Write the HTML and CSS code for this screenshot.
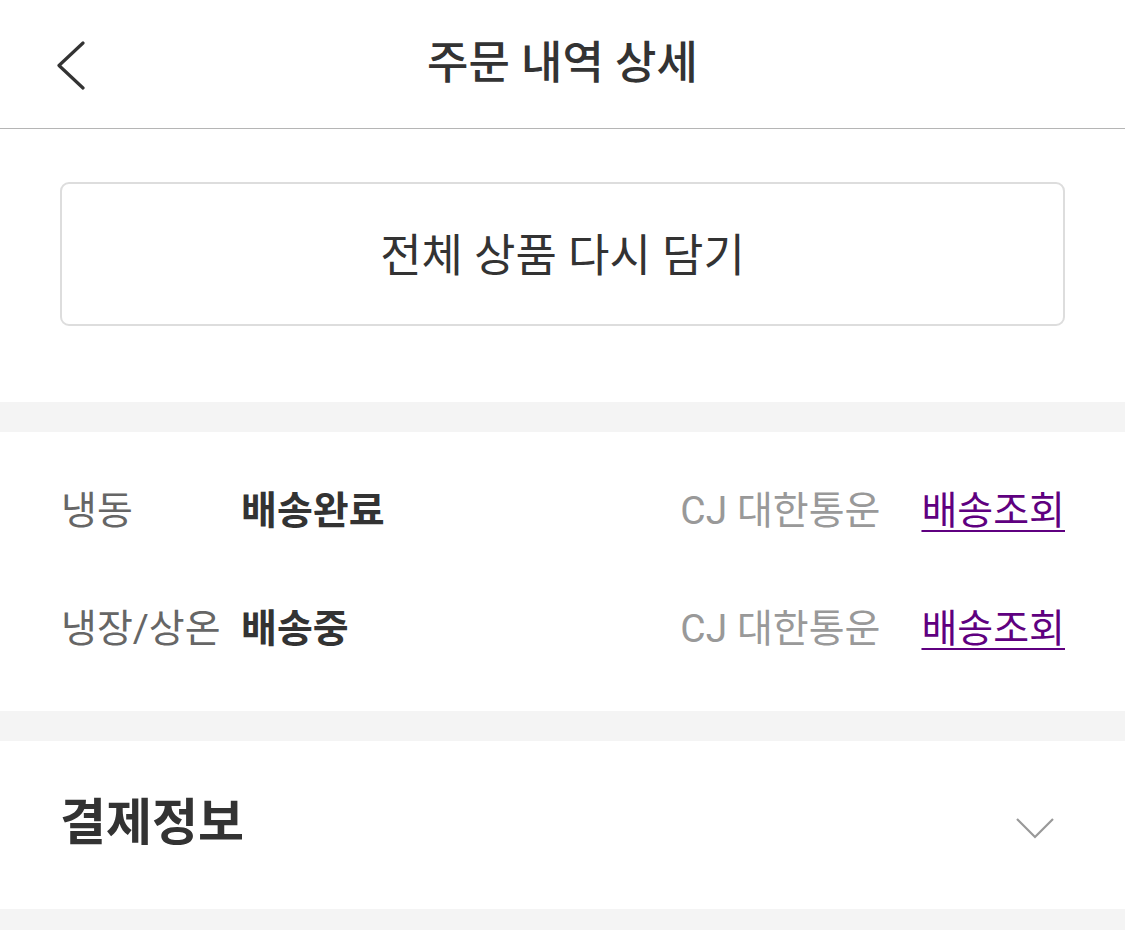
FILE: index.html
```html
<!DOCTYPE html>
<html lang="ko">
<head>
<meta charset="utf-8">
<title>주문 내역 상세</title>
<link rel="stylesheet" href="styles.css">
</head>
<body>
<div class="page">
  <header class="header">
    <button class="back" aria-label="뒤로">
      <svg width="32" height="50" viewBox="0 0 32 50"><path d="M28 3 L4 25.5 L28 48" fill="none" stroke="#333" stroke-width="3.2" stroke-linecap="round" stroke-linejoin="round"/></svg>
    </button>
    <h1 class="title">주문 내역 상세</h1>
  </header>

  <section class="cart-area">
    <button class="reorder">전체 상품 다시 담기</button>
  </section>

  <div class="divider"></div>

  <section class="delivery">
    <div class="row">
      <span class="label">냉동</span>
      <span class="status">배송완료</span>
      <span class="carrier">CJ 대한통운</span>
      <a class="track" href="#">배송조회</a>
    </div>
    <div class="row">
      <span class="label">냉장/상온</span>
      <span class="status">배송중</span>
      <span class="carrier">CJ 대한통운</span>
      <a class="track" href="#">배송조회</a>
    </div>
  </section>

  <div class="divider"></div>

  <section class="payment">
    <h2 class="payment-title">결제정보</h2>
    <svg class="chev" width="40" height="24" viewBox="0 0 40 24"><path d="M2 3 L20 21 L38 3" fill="none" stroke="#999" stroke-width="2.2"/></svg>
  </section>

  <div class="divider"></div>
</div>
</body>
</html>
```

FILE: styles.css
```css
* { box-sizing: border-box; }
html, body { margin: 0; padding: 0; background: #fff; }
body {
  font-family: Roboto, "Noto Sans CJK KR", "Noto Sans", sans-serif;
  color: #333;
}
.page { width: 1125px; }

.header {
  position: relative;
  height: 129px;
  border-bottom: 1px solid #b5b5b5;
  display: flex;
  align-items: center;
  justify-content: center;
}
.back {
  position: absolute;
  left: 55px;
  top: 40px;
  padding: 0;
  border: 0;
  background: none;
  width: 32px;
  height: 50px;
}
.back svg { display: block; }
.title {
  margin: 0;
  font-size: 45px;
  font-weight: 500;
  color: #333;
  line-height: 1;
  padding-bottom: 2px;
}

.cart-area {
  padding: 53px 60px 76px;
}
.reorder {
  display: block;
  width: 100%;
  height: 144px;
  border: 2px solid #dddddd;
  border-radius: 9px;
  background: #fff;
  font-family: inherit;
  font-size: 45px;
  font-weight: 400;
  color: #333;
  padding: 0 0 4px;
}

.divider {
  height: 30px;
  background: #f4f4f4;
}

.delivery {
  padding: 46px 60px 57px 61px;
  display: flex;
  flex-direction: column;
  gap: 60px;
}
.row {
  display: flex;
  align-items: center;
  height: 58px;
  font-size: 39px;
}
.label {
  width: 180px;
  color: #666;
  flex: none;
}
.status {
  font-weight: 700;
  color: #333;
  flex: 1;
}
.carrier {
  color: #999;
  margin-right: 41px;
}
.track {
  color: #5f0080;
  text-decoration: underline;
  text-decoration-thickness: 2px;
  text-underline-offset: 6px;
}

.payment {
  height: 168px;
  display: flex;
  align-items: center;
  justify-content: space-between;
  padding: 0 70px 0 60px;
}
.payment-title {
  margin: 0;
  font-size: 50px;
  font-weight: 700;
  color: #333;
  line-height: 1;
  padding-bottom: 4px;
}
.chev { display: block; margin-top: 6px; }
```
